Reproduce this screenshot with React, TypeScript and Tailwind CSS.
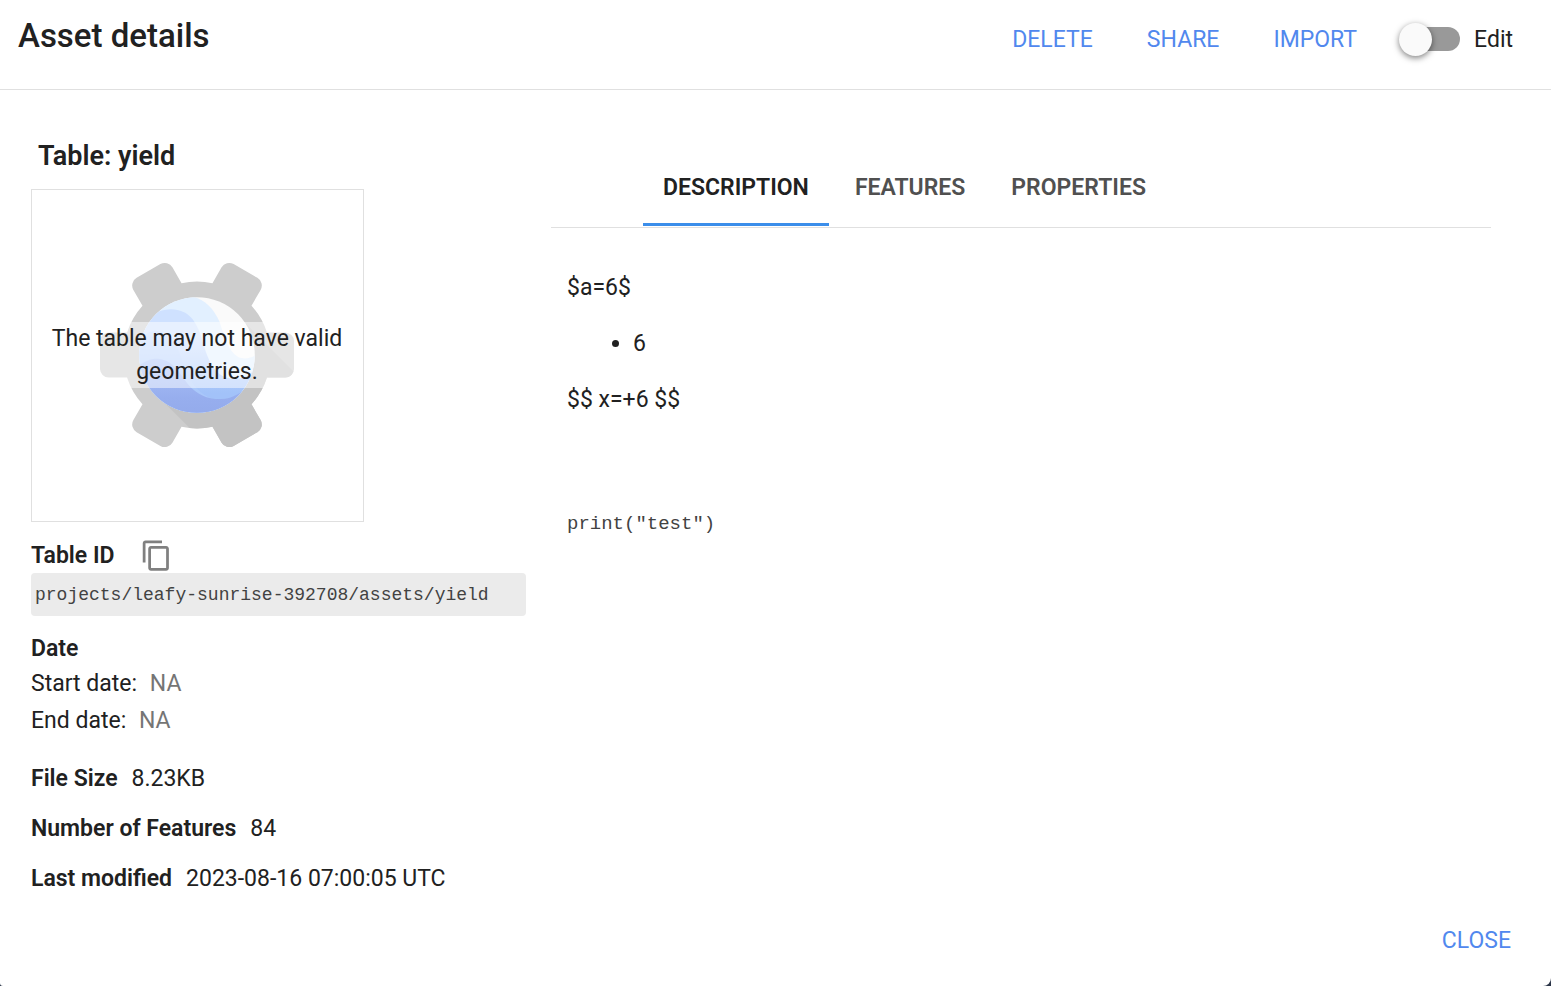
import { useState } from "react";
import type { ReactNode } from "react";
import { MdContentCopy } from "react-icons/md";

const tabs = ["DESCRIPTION", "FEATURES", "PROPERTIES"];

function EngineLogo() {
  return (
    <svg viewBox="-100 -100 200 200" className="h-[196px] w-[196px]" aria-hidden="true">
      <defs>
        <clipPath id="gear">
          <circle r="75" />
          <rect x="-99" y="-23" width="198" height="46" rx="9" />
          <rect x="-99" y="-23" width="198" height="46" rx="9" transform="rotate(60)" />
          <rect x="-99" y="-23" width="198" height="46" rx="9" transform="rotate(120)" />
        </clipPath>
        <clipPath id="globe">
          <circle r="59" />
        </clipPath>
        <linearGradient id="sky" x1="0" y1="0" x2="0" y2="1">
          <stop offset="0.25" stopColor="#cfe1ff" />
          <stop offset="0.8" stopColor="#a2c2f9" />
        </linearGradient>
        <linearGradient id="deep" x1="0" y1="0" x2="0" y2="1">
          <stop offset="0" stopColor="#a9c2f8" />
          <stop offset="0.6" stopColor="#97aeee" />
          <stop offset="1" stopColor="#92a9ea" />
        </linearGradient>
      </defs>
      <g clipPath="url(#gear)">
        <rect x="-100" y="-100" width="200" height="200" fill="#cdcdcd" />
        <path d="M-41 41L41 -41L120 38V120H38Z" fill="#c3c3c3" />
      </g>
      <g clipPath="url(#globe)">
        <rect x="-60" y="-60" width="120" height="120" fill="#fafafa" />
        <path d="M-60 -60H-10C4 -60 16 -50 23 -34C28 -18 32 -4 42 2C48 5 56 3 60 0V60H-60Z" fill="#e2f0ff" />
        <path d="M-60 -30C-44 -46 -30 -48 -20 -46C-4 -43 2 -28 7 -10C12 8 20 22 34 24C44 26 52 22 60 14V60H-60Z" fill="url(#sky)" />
        <path d="M-60 -10C-56 -22 -46 -26 -38 -24C-22 -20 -18 -2 -12 14C-4 34 8 45 22 45C38 45 50 38 60 24V60H-60Z" fill="#b4cffc" opacity="0.4" />
        <path d="M-60 12C-54 6 -46 3 -38 4C-24 6 -18 18 -9 30C0 40 10 45 24 45C36 45 46 38 60 28V70H-60Z" fill="url(#deep)" />
      </g>
    </svg>
  );
}

function Field({ label, children }: { label: string; children: ReactNode }) {
  return (
    <div className="flex gap-3.5">
      <dt className="font-semibold">{label}</dt>
      <dd>{children}</dd>
    </div>
  );
}

function TextButton({ children }: { children: ReactNode }) {
  return (
    <button type="button" className="text-[#5188ee]">
      {children}
    </button>
  );
}

export default function App() {
  const [active, setActive] = useState(tabs[0]);
  return (
    <div className="bg-[#2b3548]">
      <main className="flex min-h-screen flex-col rounded-br-lg rounded-bl-[3px] bg-white font-[Roboto,sans-serif] text-[23px] leading-[33px] text-[#212121]">
        <header className="flex h-[90px] items-start justify-between border-b border-[#e0e0e0] pr-[38px] pl-[18px] pt-[18px]">
          <h1 className="text-[33px] leading-9 font-medium">Asset details</h1>
          <div className="flex items-center pt-1">
            <div className="flex gap-[54px]">
              <TextButton>DELETE</TextButton>
              <TextButton>SHARE</TextButton>
              <TextButton>IMPORT</TextButton>
            </div>
            <label className="ml-[42px] flex items-center gap-3.5">
              <span className="relative flex h-[34px] w-[61px] items-center justify-end">
                <input type="checkbox" role="switch" className="peer absolute inset-0 opacity-0" />
                <span className="h-6 w-[50px] rounded-full bg-[#999999]" />
                <span className="absolute left-0 h-[33px] w-[33px] rounded-full bg-[#fafafa] shadow-[0_2px_6px_rgba(0,0,0,0.5)] peer-checked:left-7" />
              </span>
              Edit
            </label>
          </div>
        </header>

        <div className="flex flex-1">
          <section className="w-[526px] shrink-0 pt-12 pl-[31px]">
            <h2 className="pl-[7px] text-[27px] leading-9 font-semibold">Table: yield</h2>
            <div className="mt-[15px] grid h-[333px] w-[333px] place-items-center border border-[#e0e0e0] pr-px pb-px">
              <div className="col-start-1 row-start-1">
                <EngineLogo />
              </div>
              <p className="z-10 col-start-1 row-start-1 bg-white/50 px-4 text-center">
                The table may not have valid geometries.
              </p>
            </div>
            <div className="mt-4 flex h-[35px] items-center gap-[25px]">
              <h3 className="font-semibold">Table ID</h3>
              <button type="button" aria-label="Copy table ID" className="text-[#808080]">
                <MdContentCopy size={33} />
              </button>
            </div>
            <code className="block rounded bg-[#ebebeb] px-1 pt-1.5 pb-1 font-['Liberation_Mono',monospace] text-[18px] text-[#424242]">
              projects/leafy-sunrise-392708/assets/yield
            </code>
            <h3 className="mt-4 font-semibold">Date</h3>
            <p className="mt-0.5">
              Start date: <span className="ml-[7px] text-[#757575]">NA</span>
            </p>
            <p className="mt-1">
              End date: <span className="ml-[7px] text-[#757575]">NA</span>
            </p>
            <dl className="mt-[25px] flex flex-col gap-[17px]">
              <Field label="File Size">8.23KB</Field>
              <Field label="Number of Features">84</Field>
              <Field label="Last modified">2023-08-16 07:00:05 UTC</Field>
            </dl>
          </section>

          <section className="mr-[60px] ml-[25px] flex-1 pt-[60px]">
            <div role="tablist" className="flex h-[78px] gap-1.5 border-b border-[#e0e0e0] pl-[92px]">
              {tabs.map((tab) => (
                <button
                  key={tab}
                  type="button"
                  role="tab"
                  aria-selected={tab === active}
                  onClick={() => setActive(tab)}
                  className={
                    tab === active
                      ? "h-[76px] border-b-[3px] border-[#3b8eea] px-5 pt-0.5 font-semibold"
                      : "h-[76px] border-b-[3px] border-transparent px-5 pt-0.5 font-semibold text-[#505050]"
                  }
                >
                  {tab}
                </button>
              ))}
            </div>
            <div className="px-4 pt-[43px]">
              <p>$a=6$</p>
              <ul className="my-[23px] list-disc pl-[66px]">
                <li>6</li>
              </ul>
              <p>$$ x=+6 $$</p>
              <pre className="mt-[92px] font-['Liberation_Mono',monospace] text-[19px] text-[#424242]">print("test")</pre>
            </div>
          </section>
        </div>

        <footer className="flex justify-end pr-10 pb-[29px]">
          <TextButton>CLOSE</TextButton>
        </footer>
      </main>
    </div>
  );
}
